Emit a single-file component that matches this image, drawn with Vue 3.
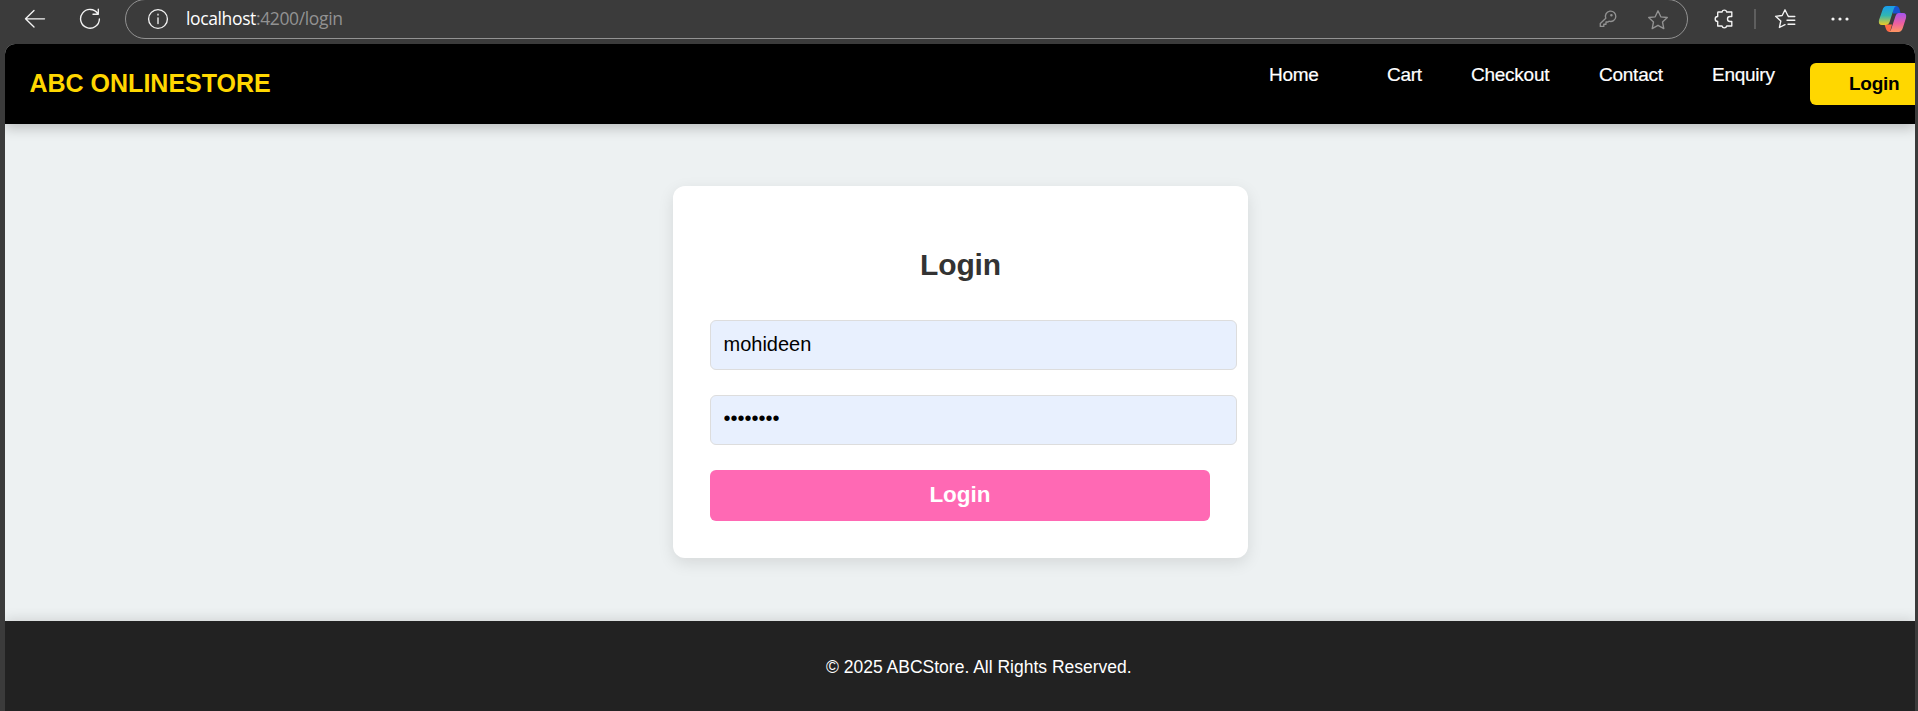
<script setup>
const links = [
  { label: 'Home', cls: 'home' },
  { label: 'Cart', cls: 'cart' },
  { label: 'Checkout', cls: 'checkout' },
  { label: 'Contact', cls: 'contact' },
  { label: 'Enquiry', cls: 'enquiry' },
]
</script>

<template>
  <div class="browser">
    <div class="toolbar">
      <svg class="back" width="22" height="20" viewBox="0 0 22 20"><path d="M10 1.5 1.5 9.8 10 18M1.5 9.8H20.5" /></svg>
      <svg class="reload" width="22" height="22" viewBox="0 0 22 22"><path d="M18.8 5.6A9.4 9.4 0 1 0 20.4 11M19.3 1.2V6.2H14" /></svg>
      <div class="address">
        <svg class="info" width="22" height="22" viewBox="0 0 22 22"><circle cx="11" cy="11" r="9.4" /><path d="M11 9.8V15.5" /><path d="M11 6.2V7" /></svg>
        <div class="url"><span>localhost</span>:4200/login</div>
        <svg class="key" width="18" height="18" viewBox="0 0 18 18"><path d="M6.8 8.2 1.3 13.4V16.4H4.8V14.2H7V12H9L10 11.2A5.2 5.2 0 1 0 6.8 8.2Z" /><circle cx="12.4" cy="5.2" r=".6" /></svg>
        <svg class="star" width="22" height="22" viewBox="0 0 22 22"><path d="M11 1.8 13.8 7.8 20.3 8.5 15.5 13 16.8 19.6 11 16.3 5.2 19.6 6.5 13 1.7 8.5 8.2 7.8Z" /></svg>
      </div>
      <svg class="puzzle" width="20" height="22" viewBox="0 0 20 22"><path d="M4.5 4H8A2.4 2.4 0 0 1 12.7 4H17.8V8.5H16A2.5 2.5 0 0 0 16 13.5H17.8V18H12.7A2.4 2.4 0 0 1 8 18H3.7V13.5A2.5 2.5 0 0 1 3.7 8.5V4.8Q3.7 4 4.5 4Z" /></svg>
      <i class="divider"></i>
      <svg class="favorites" width="23" height="22" viewBox="0 0 23 22"><path d="M11 16.6 5.4 19.5 6.8 13 1.6 8.3 8.2 7.5 11 1.8 13.8 7.5M14.5 8.5H20.8M13 12.2H20.8M14 16.2H20.8M13.8 7.5 14.5 8.5" /></svg>
      <svg class="dots" width="18" height="6" viewBox="0 0 18 6"><circle cx="2" cy="3" r="1.6" /><circle cx="9" cy="3" r="1.6" /><circle cx="16" cy="3" r="1.6" /></svg>
      <svg class="copilot" width="29" height="28" viewBox="0 0 29 28">
        <defs>
          <linearGradient id="cool" x1="0" y1="0" x2="0" y2="1"><stop offset="0" stop-color="#189bed" /><stop offset=".5" stop-color="#31b6b1" /><stop offset="1" stop-color="#eecb24" /></linearGradient>
          <linearGradient id="warm" x1="0" y1="0" x2="0" y2="1"><stop offset="0" stop-color="#a454ef" /><stop offset=".55" stop-color="#ed5f9e" /><stop offset="1" stop-color="#ff9660" /></linearGradient>
        </defs>
        <path fill="#1753d0" d="M14 1H18Q20.5 1 21.5 4L22.7 8.5H15Z" />
        <path fill="#ff6845" d="M6.5 19.5H14L12 27Q9 27 8 24Z" />
        <path fill="url(#cool)" d="M9 1H18.5Q16.5 1 15.4 5L11.6 17Q10.6 20 7.5 20H4Q0 20 1 15L4.5 5Q5.5 1 9 1Z" />
        <path fill="url(#warm)" d="M20.5 8H25Q29 8 28 13L24.8 23Q23.5 27 20.5 27H10.5Q12.5 27 13.6 23L17.5 11Q18.5 8 20.5 8Z" />
      </svg>
    </div>

    <div class="page">
      <header>
        <div class="logo">ABC ONLINESTORE</div>
        <nav>
          <a v-for="link in links" :key="link.label" :class="link.cls">{{ link.label }}</a>
          <a class="signin">Login</a>
        </nav>
      </header>
      <main>
        <form class="card" @submit.prevent>
          <h2>Login</h2>
          <input type="text" value="mohideen" />
          <input class="password" type="password" value="password" />
          <button>Login</button>
        </form>
      </main>
      <footer>© 2025 ABCStore. All Rights Reserved.</footer>
    </div>
  </div>
</template>

<style>
body { margin: 0; overflow: hidden; }
</style>

<style scoped>
* { box-sizing: border-box; }
.browser { width: 1918px; height: 711px; background: #3b3b3b; overflow: hidden; font-family: "Liberation Sans", Arial, sans-serif; }
.toolbar { display: flex; height: 44px; align-items: flex-start; }
svg { display: block; flex: none; fill: none; stroke: #f3f3f3; stroke-width: 1.35; stroke-linecap: round; stroke-linejoin: round; }
.back { margin: 9px 0 0 24px; }
.reload { margin: 8px 0 0 33px; }
.address { display: flex; align-items: flex-start; flex: none; width: 1563px; height: 40px; margin: -1px 0 0 24px; border: 1px solid #929292; border-radius: 20px; }
.info { margin: 8px 0 0 21px; }
.url { flex: none; margin: 5px 0 0 17px; width: 180px; font: 17.5px/26px "Open Sans", "Noto Sans", sans-serif; letter-spacing: -.37px; color: #929292; white-space: nowrap; }
.url span { color: #fff; }
.key { margin: 10px 0 0 1233px; stroke: #929292; }
.star { margin: 9px 0 0 30px; stroke: #929292; }
.puzzle { margin: 8px 0 0 26px; }
.divider { flex: none; width: 2px; height: 20px; background: #5e5e5e; margin: 9px 0 0 20px; }
.favorites { margin: 8px 0 0 18px; }
.dots { margin: 16px 0 0 34px; fill: #f3f3f3; stroke: none; }
.copilot { margin: 5px 0 0 29px; stroke: none; }
.page { width: 1910px; height: 667px; margin-left: 5px; background: #edf1f2; border-radius: 10px 10px 0 0; overflow: hidden; }
header { position: relative; display: flex; height: 80px; background: #000; box-shadow: 0 4px 12px rgba(0, 0, 0, .22); }
.logo { flex: none; margin: 24px 0 0 24.5px; width: 245px; font-size: 25px; line-height: 30px; font-weight: 700; color: gold; white-space: nowrap; }
nav { display: flex; flex: none; align-items: flex-start; margin-left: 994.5px; }
nav a { flex: none; font-size: 19px; line-height: 22px; margin-top: 20px; letter-spacing: -.25px; color: #fff; -webkit-text-stroke: .2px #fff; white-space: nowrap; }
.home { width: 118px; }
.cart { width: 84px; }
.checkout { width: 128px; }
.contact { width: 113px; }
.enquiry { width: 98px; }
nav .signin { width: 142px; height: 42px; margin-top: 19px; padding: 10px 0 0 39px; border-radius: 6px; background: gold; color: #000; font-weight: 700; -webkit-text-stroke: 0; }
main { height: 497px; padding: 62px 0 0 668px; }
.card { width: 575px; height: 372px; padding: 61px 37px 0; border-radius: 12px; background: #fff; box-shadow: 0 5px 16px rgba(0, 0, 0, .1); }
h2 { margin: 0 0 38px; font-size: 30px; line-height: 35px; letter-spacing: -.15px; color: #333; text-align: center; }
input { display: block; width: 527px; height: 50px; margin: 0 0 25px; padding: 0 12px 1px 12.5px; border: 1px solid #ddd; border-radius: 6px; background: #e8f0fe; font: 20px "Liberation Sans", Arial, sans-serif; color: #000; }
.password { padding-bottom: 3px; }
button { display: block; width: 500px; height: 51px; padding: 0 0 1px; border: 0; border-radius: 6px; background: #ff69b4; color: #fff; font: 700 22.5px "Liberation Sans", Arial, sans-serif; }
footer { position: relative; height: 90px; padding: 36px 0 0 821px; background: #222; color: #fff; font-size: 17.5px; line-height: 20px; box-shadow: 0 -2px 12px rgba(0, 0, 0, .12); }
</style>
